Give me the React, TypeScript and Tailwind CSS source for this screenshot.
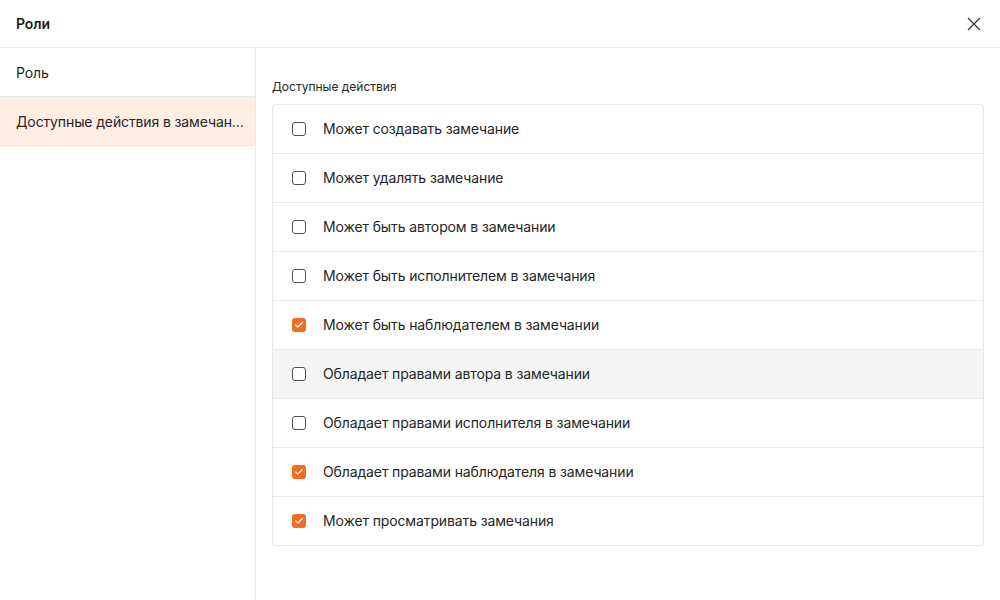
import { Check } from "lucide-react";

const actions = [
  { label: "Может создавать замечание", checked: false },
  { label: "Может удалять замечание", checked: false },
  { label: "Может быть автором в замечании", checked: false },
  { label: "Может быть исполнителем в замечания", checked: false },
  { label: "Может быть наблюдателем в замечании", checked: true },
  { label: "Обладает правами автора в замечании", checked: false, hover: true },
  { label: "Обладает правами исполнителя в замечании", checked: false },
  { label: "Обладает правами наблюдателя в замечании", checked: true },
  { label: "Может просматривать замечания", checked: true },
];

export default function App() {
  return (
    <div
      className="w-[1000px] h-[600px] bg-white flex flex-col text-[#262626] overflow-hidden tracking-[-0.12px]"
      style={{ fontFamily: "Inter, 'Noto Sans', sans-serif" }}
    >
      {/* Header */}
      <header className="h-[48px] shrink-0 flex items-center justify-between pl-4 pr-[19px] border-b border-[#e8e8e8]">
        <h1 className="text-[14px] font-semibold text-[#1a1a1a]">Роли</h1>
        <button className="text-[#333]" aria-label="Close">
          <svg width="14" height="14" viewBox="0 0 14 14" fill="none" stroke="currentColor" strokeWidth="1.2">
            <path d="M1 1L13 13M13 1L1 13" />
          </svg>
        </button>
      </header>

      <div className="flex flex-1 min-h-0">
        {/* Sidebar */}
        <aside className="w-[256px] shrink-0 border-r border-[#e8e8e8] flex flex-col">
          <div className="h-[49px] flex items-center px-4 text-[14px] border-b border-[#e8e8e8]">
            Роль
          </div>
          <div className="h-[49px] flex items-center pl-4 pr-1 text-[14px] bg-[#fdede3] border-b border-[#e8e8e8] whitespace-nowrap">
            Доступные действия в замечан...
          </div>
        </aside>

        {/* Content */}
        <main className="flex-1 pl-4 pr-4 pt-[31px]">
          <div className="text-[12px] leading-[16px] mb-[9px] tracking-normal">Доступные действия</div>
          <div className="border border-[#e8e8e8] rounded-[4px] overflow-hidden">
            {actions.map((a, i) => (
              <div
                key={a.label}
                className={`flex items-center pl-[19px] pb-[1px] text-[14px] ${
                  i < actions.length - 1 ? "h-[49px] border-b border-[#e8e8e8]" : "h-[48px]"
                } ${a.hover ? "bg-[#f5f5f5]" : ""}`}
              >
                {a.checked ? (
                  <span className="w-[14px] h-[14px] rounded-[3px] bg-[#f36c21] flex items-center justify-center">
                    <Check size={10} strokeWidth={3} className="text-white" />
                  </span>
                ) : (
                  <span className="w-[14px] h-[14px] rounded-[3px] border border-[#505050] bg-white" />
                )}
                <span className="ml-[17px]">{a.label}</span>
              </div>
            ))}
          </div>
        </main>
      </div>
    </div>
  );
}
